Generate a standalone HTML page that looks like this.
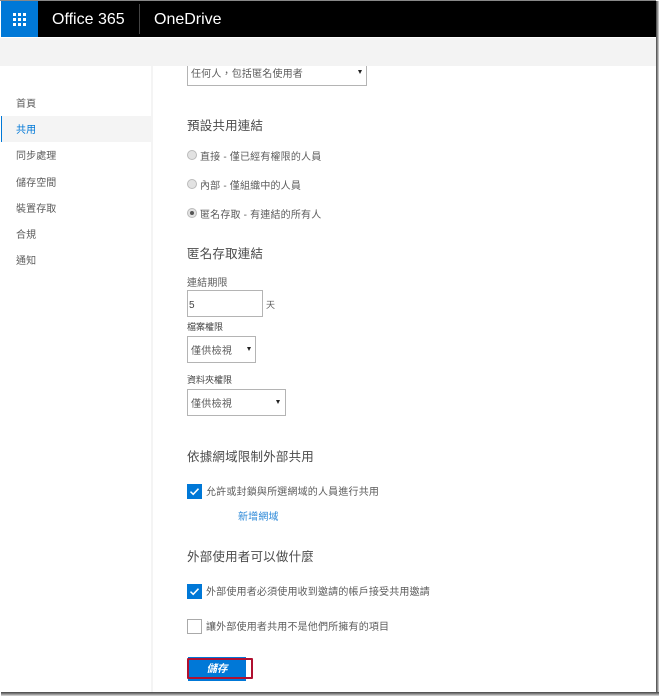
<!DOCTYPE html>
<html><head><meta charset="utf-8">
<style>
html,body{margin:0;padding:0;background:#fff}
body{width:659px;height:696px;position:relative;overflow:hidden;font-family:"Liberation Sans","Noto Sans CJK TC",sans-serif;color:#666}
.a{position:absolute;white-space:nowrap}
.s{font-size:10px;line-height:14px;color:#5c5c5c;letter-spacing:.18px;filter:blur(.35px)}
.h{font-size:12.5px;line-height:18px;color:#4c4c4c;letter-spacing:.2px;filter:blur(.35px)}
.nav{left:16px;font-size:10px;line-height:14px;color:#5c5c5c;letter-spacing:.1px;filter:blur(.35px)}
.sel{background:#fff;border:1px solid #b4b4b4;box-sizing:border-box}
.arr{width:0;height:0;border-left:2.5px solid transparent;border-right:2.5px solid transparent;border-top:4px solid #222}
.r{width:10px;height:10px;border-radius:50%;background:#e2e2e2;border:1px solid #bbb;box-sizing:border-box}
.cb{width:15px;height:15px;background:#0078d7}
</style></head><body>
<div class="a" style="left:0;top:0;width:656px;height:692px;background:#fff;overflow:hidden">
 <div class="a" style="left:1px;top:1px;width:655px;height:36px;background:#000"></div>
 <div class="a" style="left:1px;top:1px;width:37px;height:36px;background:#0078d7"></div>
 <svg class="a" style="left:13px;top:13px" width="13" height="13" fill="#fff"><rect x="0" y="0" width="3" height="3"/><rect x="5" y="0" width="3" height="3"/><rect x="10" y="0" width="3" height="3"/><rect x="0" y="5" width="3" height="3"/><rect x="5" y="5" width="3" height="3"/><rect x="10" y="5" width="3" height="3"/><rect x="0" y="10" width="3" height="3"/><rect x="5" y="10" width="3" height="3"/><rect x="10" y="10" width="3" height="3"/></svg>
 <div class="a" style="left:52px;top:10px;font-size:16px;line-height:20px;color:#fff">Office 365</div>
 <div class="a" style="left:139px;top:4px;width:1px;height:30px;background:#444"></div>
 <div class="a" style="left:154px;top:10px;font-size:16px;line-height:20px;color:#fff">OneDrive</div>
 <div class="a" style="left:0;top:38px;width:656px;height:28px;background:#f3f3f3"></div>
 <div class="a" style="left:151px;top:66px;width:2px;height:626px;background:#f4f4f4"></div>

 <div class="a nav" style="top:98px">首頁</div>
 <div class="a" style="left:1px;top:116px;width:150px;height:26px;background:#f4f4f4"></div>
 <div class="a" style="left:1px;top:116px;width:1px;height:26px;background:#0078d7"></div>
 <div class="a nav" style="top:124px;color:#0078d7">共用</div>
 <div class="a nav" style="top:150px">同步處理</div>
 <div class="a nav" style="top:177px">儲存空間</div>
 <div class="a nav" style="top:203px">裝置存取</div>
 <div class="a nav" style="top:229px">合規</div>
 <div class="a nav" style="top:255px">通知</div>

 <div class="a sel" style="left:187px;top:60px;width:180px;height:26px"></div>
 <div class="a" style="left:0;top:38px;width:656px;height:28px;background:#f3f3f3"></div>
 <div class="a s" style="left:191px;top:68px">任何人，包括匿名使用者</div>
 <div class="a arr" style="left:358px;top:70px"></div>

 <div class="a h" style="left:187px;top:117px">預設共用連結</div>
 <div class="a r" style="left:187px;top:150px"></div>
 <div class="a s" style="left:200px;top:151px">直接 - 僅已經有權限的人員</div>
 <div class="a r" style="left:187px;top:179px"></div>
 <div class="a s" style="left:200px;top:180px">內部 - 僅組織中的人員</div>
 <div class="a r" style="left:187px;top:208px"></div>
 <div class="a" style="left:190px;top:211px;width:4px;height:4px;border-radius:50%;background:#555"></div>
 <div class="a s" style="left:200px;top:209px">匿名存取 - 有連結的所有人</div>

 <div class="a h" style="left:187px;top:245px">匿名存取連結</div>
 <div class="a s" style="left:187px;top:277px">連結期限</div>
 <div class="a sel" style="left:187px;top:290px;width:76px;height:27px"></div>
 <div class="a" style="left:189px;top:299px;font-size:10px;line-height:13px;color:#444">5</div>
 <div class="a s" style="left:266px;top:298px;font-size:9px">天</div>
 <div class="a" style="left:187px;top:321px;font-size:9px;line-height:13px;color:#444;filter:blur(.35px)">檔案權限</div>
 <div class="a sel" style="left:187px;top:336px;width:69px;height:27px"></div>
 <div class="a s" style="left:191px;top:345px;letter-spacing:.3px">僅供檢視</div>
 <div class="a arr" style="left:247px;top:347px"></div>
 <div class="a" style="left:187px;top:374px;font-size:9px;line-height:13px;color:#444;filter:blur(.35px)">資料夾權限</div>
 <div class="a sel" style="left:187px;top:389px;width:99px;height:27px"></div>
 <div class="a s" style="left:191px;top:398px;letter-spacing:.3px">僅供檢視</div>
 <div class="a arr" style="left:276px;top:400px"></div>

 <div class="a h" style="left:187px;top:448px">依據網域限制外部共用</div>
 <div class="a cb" style="left:187px;top:484px"></div>
 <svg class="a" style="left:187px;top:484px" width="15" height="15" fill="none" stroke="#fff" stroke-width="1.5"><path d="M3.5 7.6l2.7 2.7 5.3-5.6"/></svg>
 <div class="a s" style="left:206px;top:486px">允許或封鎖與所選網域的人員進行共用</div>
 <div class="a s" style="left:238px;top:511px;color:#2b88d8">新增網域</div>

 <div class="a h" style="left:187px;top:548px">外部使用者可以做什麼</div>
 <div class="a cb" style="left:187px;top:584px"></div>
 <svg class="a" style="left:187px;top:584px" width="15" height="15" fill="none" stroke="#fff" stroke-width="1.5"><path d="M3.5 7.6l2.7 2.7 5.3-5.6"/></svg>
 <div class="a s" style="left:206px;top:586px">外部使用者必須使用收到邀請的帳戶接受共用邀請</div>
 <div class="a" style="left:187px;top:619px;width:15px;height:15px;box-sizing:border-box;border:1px solid #aaa;background:#fff"></div>
 <div class="a s" style="left:206px;top:621px">讓外部使用者共用不是他們所擁有的項目</div>

 <div class="a" style="left:188px;top:657px;width:58px;height:24px;background:#0078d7"></div>
 <div class="a" style="left:188px;top:657px;width:58px;height:24px;text-align:center;font-size:10.5px;line-height:24px;font-weight:bold;font-style:italic;color:#fff;filter:blur(.3px)">儲存</div>
 <div class="a" style="left:187px;top:658px;width:66px;height:21px;box-sizing:border-box;border:2px solid #b01030;border-radius:1px"></div>
</div>
<div class="a" style="left:656px;top:1px;width:3px;height:695px;background:linear-gradient(90deg,#444,#999 60%,#ddd)"></div>
<div class="a" style="left:1px;top:692px;width:658px;height:4px;background:linear-gradient(180deg,#444,#888 50%,#ddd)"></div>
<div class="a" style="left:0;top:0;width:656px;height:1px;background:#888"></div>
</body></html>
